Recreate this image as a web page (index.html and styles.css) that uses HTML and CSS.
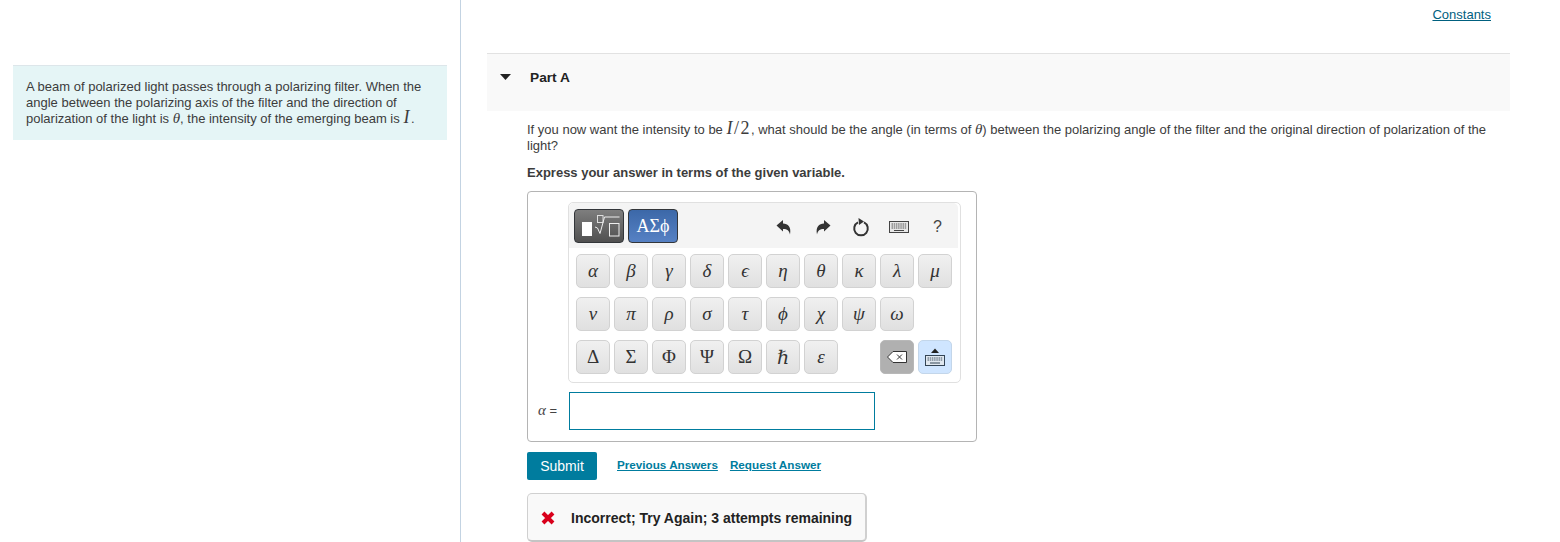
FILE: index.html
```html
<!DOCTYPE html>
<html lang="en">
<head>
<meta charset="utf-8">
<title>Part A</title>
<link rel="stylesheet" href="styles.css">
</head>
<body>
<div class="page">
  <aside class="left">
    <div class="intro">A beam of polarized light passes through a polarizing filter. When the angle between the polarizing axis of the filter and the direction of polarization of the light is <i class="m sym">θ</i>, the intensity of the emerging beam is <i class="m big">I</i>.</div>
  </aside>
  <main class="right">
    <div class="top"><a class="constants" href="#">Constants</a></div>
    <section class="part-head">
      <svg class="caret" width="11" height="6" viewBox="0 0 11 6"><path d="M0 0H11L5.500 6Z" fill="#222"/></svg>
      <h2>Part A</h2>
    </section>
    <section class="part-body">
      <p class="q">If you now want the intensity to be <span class="m big"><i>I</i>/2</span>, what should be the angle (in terms of <i class="m sym">θ</i>) between the polarizing angle of the filter and the original direction of polarization of the light?</p>
      <p class="hint">Express your answer in terms of the given variable.</p>
      <div class="answer">
        <div class="palette">
          <div class="tools">
            <div class="tab dark">
              <svg width="48" height="32" viewBox="0 0 48 32">
                <rect x="7" y="12" width="10" height="14" fill="#fff"/>
                <rect x="22.500" y="5.500" width="5.500" height="7" fill="none" stroke="#ddd"/>
                <path d="M20 17l2.500 1 2.500 5.500 4.500-16.500H44.500" fill="none" stroke="#eee"/>
                <rect x="34.500" y="13.500" width="9.500" height="12.500" fill="none" stroke="#eee"/>
              </svg>
            </div>
            <div class="tab blue">ΑΣϕ</div>
            <div class="actions">
              <svg class="act" width="16" height="16" viewBox="0 0 16 16"><path d="M.5 6.500 7 1V4.500C12 4.500 15.500 8 14 15.500 13 11.500 11.500 10 7 10V12.500Z" fill="#333"/></svg>
              <svg class="act" width="16" height="16" viewBox="0 0 16 16"><path d="M15.500 6.500 9 1V4.500C4 4.500 .5 8 2 15.500 3 11.500 4.500 10 9 10V12.500Z" fill="#333"/></svg>
              <svg class="act" width="18" height="20" viewBox="0 0 18 20"><path d="M6 5.400A6.800 6.800 0 1 0 12 5.400" fill="none" stroke="#333" stroke-width="2"/><path d="M6.500 1 12 4.500 7 8Z" fill="#333"/></svg>
              <svg class="act" width="20" height="12" viewBox="0 0 20 12"><rect x=".5" y=".5" width="19" height="11" fill="#e8e8e8" stroke="#444"/><path d="M2.500 3h15M2.500 5h15M2.500 7h15" stroke="#555" stroke-dasharray="1.500 .7"/><path d="M5 9.500h10" stroke="#444"/></svg>
              <span class="help">?</span>
            </div>
          </div>
          <div class="keys">
            <div class="row"><b class="key">α</b><b class="key">β</b><b class="key">γ</b><b class="key">δ</b><b class="key">ϵ</b><b class="key">η</b><b class="key">θ</b><b class="key">κ</b><b class="key">λ</b><b class="key">μ</b></div>
            <div class="row"><b class="key">ν</b><b class="key">π</b><b class="key">ρ</b><b class="key">σ</b><b class="key">τ</b><b class="key">ϕ</b><b class="key">χ</b><b class="key">ψ</b><b class="key">ω</b></div>
            <div class="row">
              <b class="key up">Δ</b><b class="key up">Σ</b><b class="key up">Φ</b><b class="key up">Ψ</b><b class="key up">Ω</b><b class="key">ℏ</b><b class="key">ε</b>
              <span class="key spacer"></span>
              <span class="key back"><svg width="20" height="12" viewBox="0 0 20 12"><path d="M6 .5H19.500V11.500H6L.5 6Z" fill="#fff" stroke="#333"/><path d="M10 3.500l5 5M15 3.500l-5 5" stroke="#333"/></svg></span>
              <span class="key kbd"><svg width="20" height="20" viewBox="0 0 20 20"><path d="M6 6 10 1.500 14 6Z" fill="#222"/><rect x=".5" y="8.500" width="19" height="10" fill="#dfe7ef" stroke="#345"/><path d="M2.500 11h15M2.500 13h15" stroke="#456" stroke-dasharray="1.500 .7"/><path d="M5 16h10" stroke="#345"/></svg></span>
            </div>
          </div>
        </div>
        <div class="entry">
          <label><i class="m sym">α</i> =</label>
          <div class="field"></div>
        </div>
      </div>
      <div class="controls">
        <button class="submit" type="button">Submit</button>
        <a class="link first" href="#">Previous Answers</a>
        <a class="link" href="#">Request Answer</a>
      </div>
      <div class="feedback">
        <svg width="16" height="16" viewBox="0 0 16 16"><path d="M3 3 13 13M13 3 3 13" stroke="#d9001b" stroke-width="4"/></svg>
        <span>Incorrect; Try Again; 3 attempts remaining</span>
      </div>
    </section>
  </main>
</div>
</body>
</html>
```
FILE: styles.css
```css
* { box-sizing: border-box; }
html, body { margin: 0; height: 542px; overflow: hidden; background: #fff; }
body { font: 13px/16px "Liberation Sans", Arial, sans-serif; color: #3c3c3c; }
.page { display: flex; height: 542px; }
.left { width: 461px; flex: none; border-right: 1px solid #c3d3e2; padding: 65px 13px 0; }
.intro { width: 434px; height: 75px; padding: 13px 13px; background: #e5f5f6; border-top: 1px solid #dde6ea; }
.m { font-family: "Liberation Serif", "DejaVu Serif", serif; font-style: italic; }
.m i { font-style: italic; }
span.m { font-style: normal; }
.sym { font-size: 15px; line-height: 0; }
.big { font-size: 18px; line-height: 0; letter-spacing: 1.500px; }
.right { width: 1023px; margin-left: 26px; flex: none; }
.top { height: 53px; padding: 7px 19px 0 0; text-align: right; }
.constants { color: #00607f; text-decoration: underline; }
.part-head { height: 58px; background: #f9f9f9; border-top: 1px solid #e2e2e2; display: flex; align-items: flex-start; padding: 16px 0 0 13px; }
.caret { margin: 4px 19px 0 0; flex: none; }
h2 { margin: 0; font-size: 13.700px; line-height: 16px; font-weight: bold; color: #222; }
.part-body { padding: 11px 18px 0 40px; }
.q { margin: 0; }
.hint { margin: 11px 0 0; font-weight: bold; }
.answer { width: 450px; height: 251px; margin-top: 10px; border: 1px solid #b4b4b4; border-radius: 4px; padding: 10px 0 0 40px; }
.palette { width: 393px; height: 181px; border: 1px solid #e0e0e0; border-radius: 5px; background: #fff; }
.tools { height: 45px; background: #f4f4f4; border-radius: 5px 5px 0 0; display: flex; padding: 6px 0 0 5px; margin-right: 2px; }
.tab { height: 34px; border: 1px solid #33363a; border-radius: 4px; color: #fff; display: flex; align-items: center; justify-content: center; }
.tab.dark { width: 50px; background: linear-gradient(#7e7e7e, #505050); }
.tab.blue { width: 50px; margin-left: 4px; background: linear-gradient(#3c68a8, #5681c4); font: 18px "Liberation Serif", serif; }
.actions { display: flex; align-items: center; height: 36px; margin-left: 98px; }
.act { flex: none; }
.act:nth-child(1) { margin-right: 23px; }
.act:nth-child(2) { margin-right: 21px; }
.act:nth-child(3) { margin-right: 19px; }
.help { margin-left: 24px; font-size: 16px; color: #444; }
.keys { padding: 6px 0 0 7px; }
.row { display: flex; gap: 4px; margin-bottom: 9px; }
.row:last-child { margin-bottom: 0; }
.key { width: 34px; height: 34px; flex: none; border: 1px solid #d2d2d2; border-radius: 5px; background: linear-gradient(#f0f0f0, #e0e0e0); display: flex; align-items: center; justify-content: center; font: italic 19px "Liberation Serif", "DejaVu Serif", serif; color: #333; }
.key.up { font-style: normal; }
.spacer { visibility: hidden; }
.key.back { background: #b0b0b0; border-color: #b8b8b8; }
.key.kbd { background: #cfe5ff; border-color: #c3d6ea; }
.entry { display: flex; align-items: center; margin: 9px 0 0 -30px; }
.entry label { width: 31px; color: #444; }
.field { width: 306px; height: 38px; border: 1px solid #007c9e; background: #fff; }
.controls { display: flex; align-items: flex-start; margin-top: 10px; height: 28px; }
.submit { width: 70px; height: 28px; border: 0; border-radius: 2px; background: #007c9e; color: #fff; padding: 0; font: 14px "Liberation Sans", sans-serif; }
.link { color: #007c9e; font-size: 11.700px; font-weight: bold; line-height: 16px; margin: 5px 0 0 12px; text-decoration: underline; }
.link.first { margin-left: 20px; }
.feedback { width: 340px; height: 49px; margin-top: 13px; border: 1px solid #d0d0d0; border-bottom: 2px solid #c4c4c4; border-right-width: 2px; border-radius: 5px; background: #f9f9f9; display: flex; align-items: center; padding: 2px 0 0 12px; gap: 15px; font-size: 14px; font-weight: bold; color: #222; white-space: nowrap; }
```
